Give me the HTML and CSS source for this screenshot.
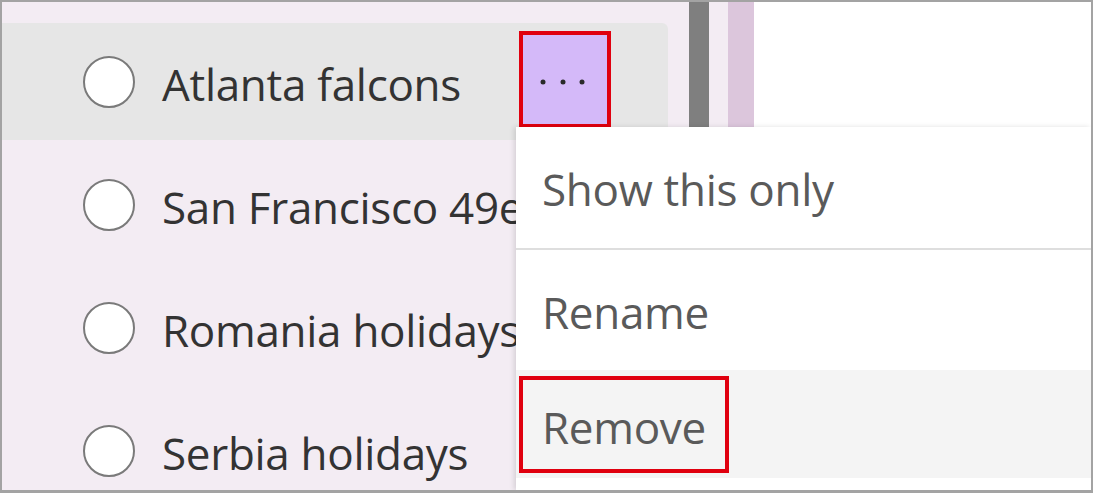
FILE: index.html
```html
<!DOCTYPE html>
<html>
  <head>
    <meta charset="utf-8">
    <title>Categories</title>
    <link rel="stylesheet" href="styles.css">
  </head>
  <body>
    <div class="frame">
      <div class="nav">
        <ul class="list">
          <li class="item selected">
            <span class="radio"></span>
            <span class="label">Atlanta falcons</span>
            <button class="more" title="More options">
              <svg width="52" height="8" viewBox="0 0 52 8"><circle cx="6" cy="4" r="2.5"/><circle cx="26" cy="4" r="2.5"/><circle cx="45" cy="4" r="2.5"/></svg>
            </button>
          </li>
          <li class="item"><span class="radio"></span><span class="label">San Francisco 49ers</span></li>
          <li class="item"><span class="radio"></span><span class="label">Romania holidays</span></li>
          <li class="item"><span class="radio"></span><span class="label">Serbia holidays</span></li>
        </ul>
        <div class="splitter"></div>
        <div class="rail"></div>
      </div>
      <div class="canvas"></div>

      <div class="menu">
        <div class="menu-item first">Show this only</div>
        <div class="menu-item">Rename</div>
        <div class="menu-item hover"><span class="mark">Remove</span></div>
      </div>
    </div>
  </body>
</html>
```

FILE: styles.css
```css
* {
  box-sizing: border-box;
}
body {
  margin: 0;
  font-family: "Open Sans", "Noto Sans", sans-serif;
  background: #fff;
}
div.frame {
  position: relative;
  width: 1093px;
  height: 493px;
  border: 2px solid #a3a3a3;
  border-bottom-width: 3px;
  display: flex;
  overflow: hidden;
  background: #fff;
}
div.nav {
  display: flex;
  width: 752px;
  background: #f3ecf3;
}
ul.list {
  list-style: none;
  margin: 0;
  padding: 21px 0 0 0;
  width: 666px;
  display: flex;
  flex-direction: column;
  gap: 6px;
}
li.item {
  position: relative;
  flex: 0 0 117px;
  display: flex;
  align-items: center;
  padding-left: 81px;
  white-space: nowrap;
}
li.item.selected {
  background: #e6e6e6;
  border-radius: 0 6px 6px 0;
}
span.radio {
  flex: 0 0 52px;
  height: 52px;
  border: 2px solid #7a7a7a;
  border-radius: 50%;
  background: #fff;
  margin-right: 27px;
}
span.label {
  font-size: 44px;
  letter-spacing: -0.3px;
  color: #333;
  margin-top: 4px;
}
button.more {
  position: absolute;
  left: 517px;
  top: 8px;
  width: 92px;
  height: 97px;
  border: 4px solid #e0000f;
  background: #d4b9f9;
  padding: 0 4px 0 0;
  display: flex;
  align-items: center;
  justify-content: center;
  fill: #2a2a2a;
}
button.more svg {
  margin-top: 5px;
}
div.splitter {
  width: 20px;
  margin-left: 21px;
  background: #7f7f7f;
}
div.rail {
  width: 26px;
  margin-left: 19px;
  background: #dcc6dc;
}
div.canvas {
  flex: 1;
  background: #fff;
}
div.menu {
  position: absolute;
  left: 514px;
  top: 125px;
  right: 0;
  bottom: 0;
  background: #fff;
  box-shadow: -2px 0 5px rgba(0, 0, 0, 0.12);
  padding-bottom: 12px;
  display: flex;
  flex-direction: column;
}
div.menu-item {
  display: flex;
  align-items: center;
  padding: 4px 0 0 26px;
  height: 120px;
  font-size: 44px;
  letter-spacing: -0.3px;
  color: #5a5a5a;
  white-space: nowrap;
}
div.menu-item.first {
  height: 123px;
  padding-top: 2px;
  border-bottom: 2px solid #dedede;
}
div.menu-item.hover {
  flex: 1;
  height: auto;
  background: #f4f4f4;
  padding: 0 0 0 3px;
}
span.mark {
  display: flex;
  align-items: center;
  height: 97px;
  padding: 6px 19px 0 19px;
  border: 4px solid #e0000f;
}
```
